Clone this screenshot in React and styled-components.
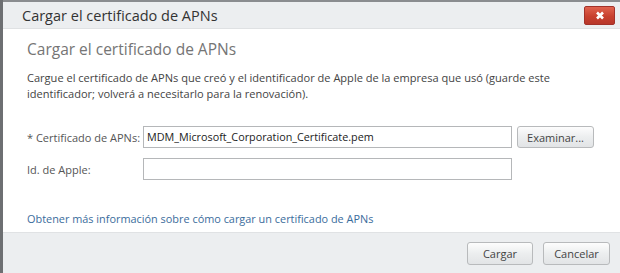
import styled, { createGlobalStyle } from "styled-components";

const Global = createGlobalStyle`
  html, body {
    margin: 0;
    padding: 0;
    background: #6d6f72;
  }
  body {
    font-family: "Open Sans", "Noto Sans", sans-serif;
  }
`;

const Dialog = styled.div`
  width: 617px;
  height: 271px;
  margin-left: 3px;
  border-top: 2px solid #8a8c8f;
  border-right: 1px solid #a2a4a6;
  background: #fff;
  display: flex;
  flex-direction: column;
`;

const TitleBar = styled.div`
  height: 26px;
  background: #eceef0;
  border-bottom: 1px solid #dfe1e3;
  display: flex;
  align-items: center;
  justify-content: space-between;
  padding: 0 5px 0 19px;
  h1 {
    margin: 0;
    font-size: 14.5px;
    font-weight: 400;
    color: #333;
  }
`;

const CloseButton = styled.button`
  width: 31px;
  height: 19px;
  border: 1px solid #a2322a;
  border-radius: 2px;
  background: linear-gradient(#e0634f, #c8412f 55%, #b8372a);
  display: flex;
  align-items: center;
  justify-content: center;
  padding: 0;
`;

const Body = styled.div`
  flex: 1;
  padding: 8px 24px 0 24px;
  display: flex;
  flex-direction: column;
`;

const Heading = styled.h2`
  margin: 0;
  font-size: 15.5px;
  font-weight: 400;
  color: #757575;
  line-height: 24px;
`;

const Intro = styled.p`
  margin: 9px 0 0 0;
  font-size: 11.05px;
  line-height: 16px;
  color: #444;
`;

const Form = styled.div`
  margin-top: 24px;
  display: grid;
  grid-template-columns: 116px 369px auto;
  row-gap: 10px;
  align-items: center;
  justify-items: start;
`;

const Label = styled.label`
  font-size: 11px;
  color: #555;
  white-space: nowrap;
`;

const Input = styled.div`
  box-sizing: border-box;
  width: 369px;
  height: 22px;
  border: 1px solid #b5b7b9;
  background: #fff;
  font-size: 10.8px;
  color: #222;
  line-height: 20px;
  padding: 0 3px;
`;

const Button = styled.button`
  font-family: inherit;
  font-size: 11px;
  color: #444;
  height: ${(p) => p.$h || 22}px;
  width: ${(p) => p.$w}px;
  margin-left: ${(p) => p.$ml || 0}px;
  border: 1px solid #b8babc;
  border-radius: 3px;
  background: linear-gradient(#fdfdfd, #eceeef 50%, #e2e4e6);
  padding: 0;
`;

const Link = styled.a`
  margin-top: auto;
  margin-bottom: 6px;
  font-size: 10.9px;
  color: #3a6c9c;
  text-decoration: none;
`;

const Footer = styled.div`
  height: 40px;
  background: #eceef0;
  border-top: 1px solid #e0e2e4;
  display: flex;
  justify-content: flex-end;
  align-items: center;
  gap: 10px;
  padding-right: 10px;
`;

export default function App() {
  return (
    <>
      <Global />
      <Dialog>
        <TitleBar>
          <h1>Cargar el certificado de APNs</h1>
          <CloseButton>
            <svg width="10" height="9" viewBox="0 0 10 9">
              <path d="M2 1.5 L8 7.5 M8 1.5 L2 7.5" stroke="#fff" strokeWidth="2.6" />
            </svg>
          </CloseButton>
        </TitleBar>
        <Body>
          <Heading>Cargar el certificado de APNs</Heading>
          <Intro>
            Cargue el certificado de APNs que creó y el identificador de Apple de la empresa que usó (guarde este
            identificador; volverá a necesitarlo para la renovación).
          </Intro>
          <Form>
            <Label>* Certificado de APNs:</Label>
            <Input>MDM_Microsoft_Corporation_Certificate.pem</Input>
            <Button $w={77} $ml={5}>Examinar...</Button>
            <Label>Id. de Apple:</Label>
            <Input />
            <span />
          </Form>
          <Link href="#">Obtener más información sobre cómo cargar un certificado de APNs</Link>
        </Body>
        <Footer>
          <Button $w={66} $h={23}>Cargar</Button>
          <Button $w={67} $h={23}>Cancelar</Button>
        </Footer>
      </Dialog>
    </>
  );
}
